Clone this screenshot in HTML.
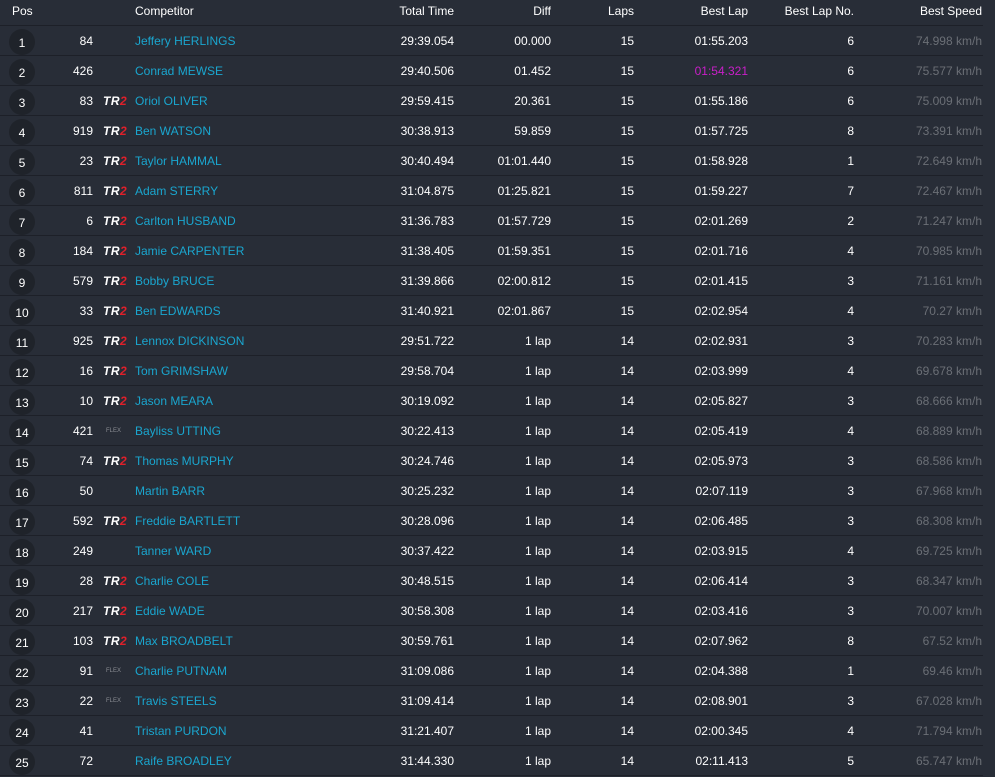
<!DOCTYPE html>
<html><head><style>
body{margin:0;background:#282d37;width:995px;height:777px;overflow:hidden;font-family:"Liberation Sans",Arial,sans-serif;font-size:12px;color:#fff}
.h{position:absolute;top:0;height:25px;line-height:22px;left:0;width:983px;border-bottom:1px solid #1d2028}
.r{position:absolute;left:0;width:983px;height:29px;border-bottom:1px solid #1d2028}
.c{position:absolute;white-space:nowrap}
.r .c{top:8px}
.circ{position:absolute;left:9px;top:3px;width:26px;height:26px;border-radius:50%;background:#1f232a;text-align:center;line-height:28px}
.nm{color:#1aa6cf}
.sp{color:#6b6f76}
.tr{font-style:italic;font-weight:bold;font-size:12px;letter-spacing:0.5px;color:#fff}
.tr b{color:#e0202a}
.fx{font-size:6px;color:#8a8d93;top:12px!important}
</style></head><body>
<div class="h">
<span class="c" style="left:12px">Pos</span>
<span class="c" style="left:135px">Competitor</span>
<span class="c" style="right:529px">Total Time</span>
<span class="c" style="right:432px">Diff</span>
<span class="c" style="right:349px">Laps</span>
<span class="c" style="right:235px">Best Lap</span>
<span class="c" style="right:129px">Best Lap No.</span>
<span class="c" style="right:1px">Best Speed</span>
</div>
<div id="rows"></div>
<script>
const d=[
[84,"","Jeffery HERLINGS","29:39.054","00.000",15,"01:55.203",6,"74.998 km/h"],
[426,"","Conrad MEWSE","29:40.506","01.452",15,"01:54.321",6,"75.577 km/h"],
[83,"t","Oriol OLIVER","29:59.415","20.361",15,"01:55.186",6,"75.009 km/h"],
[919,"t","Ben WATSON","30:38.913","59.859",15,"01:57.725",8,"73.391 km/h"],
[23,"t","Taylor HAMMAL","30:40.494","01:01.440",15,"01:58.928",1,"72.649 km/h"],
[811,"t","Adam STERRY","31:04.875","01:25.821",15,"01:59.227",7,"72.467 km/h"],
[6,"t","Carlton HUSBAND","31:36.783","01:57.729",15,"02:01.269",2,"71.247 km/h"],
[184,"t","Jamie CARPENTER","31:38.405","01:59.351",15,"02:01.716",4,"70.985 km/h"],
[579,"t","Bobby BRUCE","31:39.866","02:00.812",15,"02:01.415",3,"71.161 km/h"],
[33,"t","Ben EDWARDS","31:40.921","02:01.867",15,"02:02.954",4,"70.27 km/h"],
[925,"t","Lennox DICKINSON","29:51.722","1 lap",14,"02:02.931",3,"70.283 km/h"],
[16,"t","Tom GRIMSHAW","29:58.704","1 lap",14,"02:03.999",4,"69.678 km/h"],
[10,"t","Jason MEARA","30:19.092","1 lap",14,"02:05.827",3,"68.666 km/h"],
[421,"f","Bayliss UTTING","30:22.413","1 lap",14,"02:05.419",4,"68.889 km/h"],
[74,"t","Thomas MURPHY","30:24.746","1 lap",14,"02:05.973",3,"68.586 km/h"],
[50,"","Martin BARR","30:25.232","1 lap",14,"02:07.119",3,"67.968 km/h"],
[592,"t","Freddie BARTLETT","30:28.096","1 lap",14,"02:06.485",3,"68.308 km/h"],
[249,"","Tanner WARD","30:37.422","1 lap",14,"02:03.915",4,"69.725 km/h"],
[28,"t","Charlie COLE","30:48.515","1 lap",14,"02:06.414",3,"68.347 km/h"],
[217,"t","Eddie WADE","30:58.308","1 lap",14,"02:03.416",3,"70.007 km/h"],
[103,"t","Max BROADBELT","30:59.761","1 lap",14,"02:07.962",8,"67.52 km/h"],
[91,"f","Charlie PUTNAM","31:09.086","1 lap",14,"02:04.388",1,"69.46 km/h"],
[22,"f","Travis STEELS","31:09.414","1 lap",14,"02:08.901",3,"67.028 km/h"],
[41,"","Tristan PURDON","31:21.407","1 lap",14,"02:00.345",4,"71.794 km/h"],
[72,"","Raife BROADLEY","31:44.330","1 lap",14,"02:11.413",5,"65.747 km/h"]];
let h="";
d.forEach((r,i)=>{
let lg=r[1]=="t"?'<span class="c tr" style="left:103px">TR<b>2</b></span>':r[1]=="f"?'<span class="c fx" style="left:106px">FLEX</span>':"";
h+=`<div class="r" style="top:${26+i*30}px"><span class="circ">${i+1}</span>
<span class="c" style="right:890px">${r[0]}</span>${lg}
<span class="c nm" style="left:135px">${r[2]}</span>
<span class="c" style="right:529px">${r[3]}</span>
<span class="c" style="right:432px">${r[4]}</span>
<span class="c" style="right:349px">${r[5]}</span>
<span class="c" style="right:235px;${i==1?'color:#c91fc9':''}">${r[6]}</span>
<span class="c" style="right:129px">${r[7]}</span>
<span class="c sp" style="right:1px">${r[8]}</span></div>`;});
document.getElementById("rows").innerHTML=h;
</script>
</body></html>
